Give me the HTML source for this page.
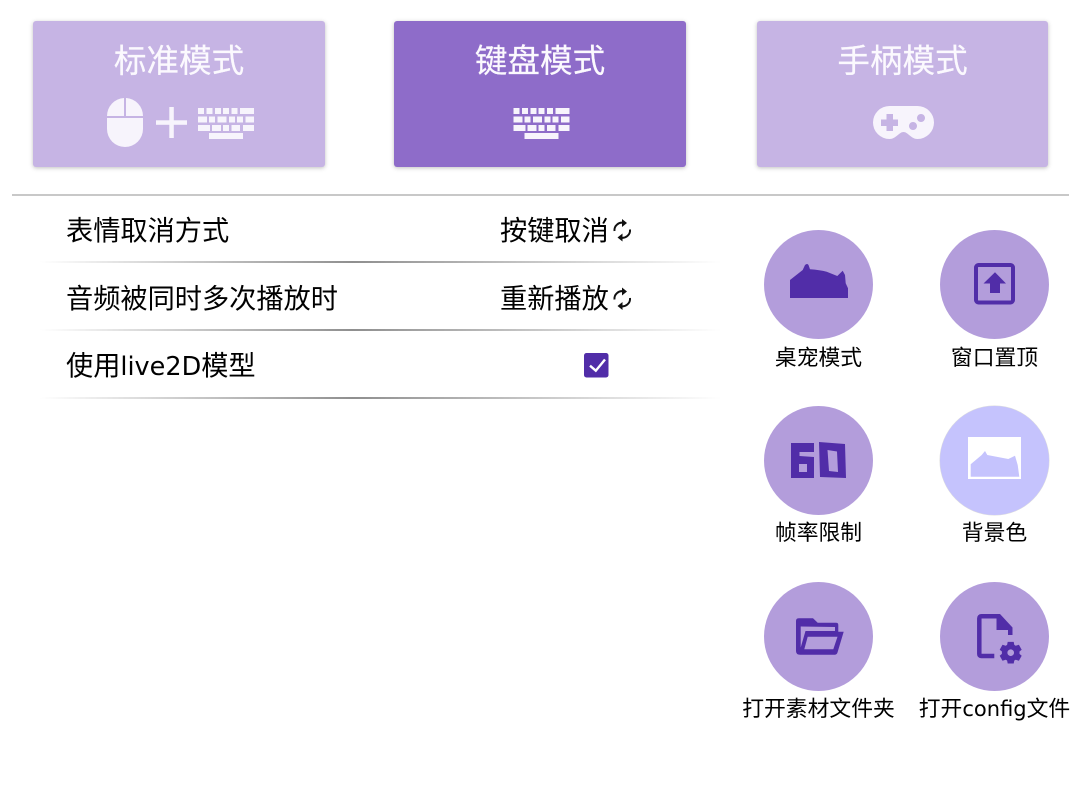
<!DOCTYPE html>
<html lang="zh"><head><meta charset="utf-8">
<style>
html,body{margin:0;padding:0;background:#fff;width:1080px;height:806px;overflow:hidden}
body{position:relative;font-family:"Liberation Sans","Noto Sans CJK SC",sans-serif;color:#000}
#w{position:absolute;left:0;top:0;width:1080px;height:806px;filter:blur(.35px)}
.card{position:absolute;top:21px;width:292px;height:146px;border-radius:3px;background:#c6b4e4;box-shadow:0 1px 4px rgba(0,0,0,.25)}
.card.on{background:#8e6cc9}
.t{position:absolute;left:0;right:0;top:19px;text-align:center;font-size:32.6px;line-height:42px;color:#fbf9fe;white-space:nowrap;-webkit-text-stroke:.2px #fbf9fe}
.abs{position:absolute;white-space:nowrap}
.l{font-size:27.2px;line-height:36px;color:#000}
.lb{font-size:21.8px;line-height:28px;color:#000;text-align:center;width:176px}
.c{position:absolute;width:109px;height:109px;border-radius:50%;background:#b39ddb}
.d{position:absolute;left:40px;width:680px;height:1.6px;background:linear-gradient(90deg,rgba(120,120,120,0) 0,#8f8f8f 46%,rgba(120,120,120,0) 100%)}
.la{font-family:"DejaVu Sans",sans-serif}
svg{position:absolute;left:0;top:0}
</style></head><body><div id="w">
<div class="card" style="left:33px"><div class="t">标准模式</div></div>
<div class="card on" style="left:394px"><div class="t">键盘模式</div></div>
<div class="card" style="left:757px;width:291px"><div class="t">手柄模式</div></div>
<div class="abs" style="left:12px;top:193.500px;width:1057px;height:2px;background:#c8c8c8"></div>

<div class="abs l" style="left:66px;top:213px">表情取消方式</div>
<div class="abs l" style="left:66px;top:281px">音频被同时多次播放时</div>
<div class="abs l" style="left:66px;top:348px">使用<span class="la" style="font-size:25.500px">live2D</span>模型</div>
<div class="abs l" style="left:500px;top:213px">按键取消</div>
<div class="abs l" style="left:500px;top:281px">重新播放</div>
<div class="d" style="top:261.200px"></div>
<div class="d" style="top:329.200px"></div>
<div class="d" style="top:397.200px"></div>

<div class="c" style="left:764px;top:229.500px"></div>
<div class="c" style="left:940px;top:229.500px"></div>
<div class="c" style="left:764px;top:405.500px"></div>
<div class="c" style="left:940px;top:405.500px;background:#c5c3fd;box-shadow:0 0 0 .5px #ddd"></div>
<div class="c" style="left:764px;top:582px"></div>
<div class="c" style="left:940px;top:582px"></div>

<div class="abs lb" style="left:730.500px;top:344px">桌宠模式</div>
<div class="abs lb" style="left:906.500px;top:344px">窗口置顶</div>
<div class="abs lb" style="left:730.500px;top:519px">帧率限制</div>
<div class="abs lb" style="left:906.500px;top:519px">背景色</div>
<div class="abs lb" style="left:730.500px;top:695px">打开素材文件夹</div>
<div class="abs lb" style="left:906.500px;top:695px">打开<span class="la" style="font-size:21px">config</span>文件</div>

<svg width="1080" height="806" viewBox="0 0 1080 806">
<defs>
<g id="kb">
<rect x="0" y="0" width="6" height="6"/><rect x="8.500" y="0" width="6" height="6"/><rect x="17" y="0" width="6" height="6"/><rect x="25" y="0" width="6" height="6"/><rect x="33.500" y="0" width="6" height="6"/><rect x="42" y="0" width="14" height="6"/>
<rect x="0" y="8.500" width="9" height="6"/><rect x="11" y="8.500" width="6" height="6"/><rect x="19.500" y="8.500" width="9" height="6"/><rect x="31" y="8.500" width="6" height="6"/><rect x="39" y="8.500" width="6" height="6"/><rect x="47.500" y="8.500" width="8.500" height="6"/>
<rect x="0" y="17" width="12" height="6"/><rect x="14" y="17" width="9" height="6"/><rect x="25" y="17" width="6" height="6"/><rect x="33.500" y="17" width="8.500" height="6"/><rect x="45" y="17" width="11" height="6"/>
<rect x="11" y="25" width="34" height="6"/>
</g>
</defs>
<g fill="#f7f4fc">
<path d="M107 116 A18 18 0 0 1 124 98 V116Z"/>
<path d="M126 98 A18 18 0 0 1 143 116 H126Z"/>
<path d="M107 118 H143 V129 A18 18 0 0 1 107 129Z"/>
<rect x="156" y="120.300" width="31" height="4.500"/><rect x="169.300" y="107" width="4.500" height="31"/>
<use href="#kb" x="198" y="108"/>
<use href="#kb" x="513.500" y="108"/>
<path fill-rule="evenodd" d="M889.500 106 H917.500 A16.500 16.500 0 0 1 917.500 139 C911 139 908 132 903.500 132 C899 132 896 139 889.500 139 A16.500 16.500 0 0 1 889.500 106Z M886.500 114 V119.500 H881 V126 H886.500 V131 H893 V126 H898 V119.500 H893 V114Z M921 114 a4 4 0 1 0 .01 0Z M913 122 a4 4 0 1 0 .01 0Z"/>
</g>
<path fill="#512da8" d="M790 298 V280 L802.700 270 L805 265 Q807.300 263 808.500 265 L810 269.300 Q820 270 826.700 271.700 L837.300 276 L842.700 270.700 L845 275 L845.700 283.300 L848 288.300 V298Z"/>
<rect x="976" y="265" width="37" height="37.500" rx="2.500" fill="none" stroke="#512da8" stroke-width="4"/>
<path fill="#512da8" d="M995 272.300 L1006 283.500 H1000 V293 H990 V283.500 H983.500Z"/>
<path fill="#512da8" fill-rule="evenodd" d="M791 443 H814 V452 H799.500 V456 L814 457 V478 H791Z M799 464 V472 H807 V464Z"/>
<path fill="#512da8" fill-rule="evenodd" d="M819 442 L845 444 L846 478 L820 477Z M827.500 450 L829 471 L838 472 L837 451.500Z"/>
<rect x="968" y="437" width="53" height="42" fill="#fff"/>
<path fill="#c5c3fd" d="M970.700 476.700 V464.300 L981.700 455 L985 451 L987.300 455 L1008.300 459 L1015 455.700 L1017.700 465 L1019.300 476.700Z"/>
<path fill="#512da8" fill-rule="evenodd" d="M799 618.300 H813 L817.700 622.800 H836 Q838.300 622.800 838.300 625 V631.700 H843.700 L837.500 652.500 Q836.700 654.700 835 654.700 H800 Q796 654.700 796 651 V621 Q796 618.300 799 618.300Z M800.700 626.500 V647.500 L805.500 631 H835 V627Z M807.700 636.700 L804.300 649.300 H833.300 L837.500 636.700Z"/>
<path fill="none" stroke="#512da8" stroke-width="4.500" d="M994.300 656 H981.500 Q979.300 656 979.300 654 V618.500 Q979.300 616.300 981.500 616.300 H997"/>
<path fill="#512da8" d="M996.500 614 H1000 L1012.500 627.500 V635 H1008 V630 H996.500Z"/>
<path transform="translate(1010.700 652.700)" fill="#512da8" fill-rule="evenodd" d="M-3 -10.800 H3 L3.600 -7.800 L5 -7 L8.200 -8 L11 -3 L8.800 -1.200 V1.200 L11 3 L8.200 8 L5 7 L3.600 7.800 L3 10.800 H-3 L-3.600 7.800 L-5 7 L-8.200 8 L-11 3 L-8.800 1.200 V-1.200 L-11 -3 L-8.200 -8 L-5 -7 L-3.600 -7.800Z M0 -3.300 a3.300 3.300 0 1 0 .01 0Z"/>
<g fill="none" stroke="#111" stroke-width="2">
<path d="M614.500 231 A7.500 7.500 0 0 1 624 223"/><path d="M630 229.500 A7.500 7.500 0 0 1 620.500 237.500"/>
<path d="M614.500 299.500 A7.500 7.500 0 0 1 624 291.500"/><path d="M630 298 A7.500 7.500 0 0 1 620.500 306"/>
</g>
<path fill="#111" d="M622 219 L627 223 L622 227Z M622.500 233.500 L617.500 237.500 L622.500 241.500Z M622 287.500 L627 291.500 L622 295.500Z M622.500 302 L617.500 306 L622.500 310Z"/>
<rect x="584" y="353" width="24.500" height="24.500" rx="2.500" fill="#512da8"/>
<path d="M590 365.700 L595.800 370.700 L605 359.500" fill="none" stroke="#fff" stroke-width="2.400"/>
</svg>
</div></body></html>
